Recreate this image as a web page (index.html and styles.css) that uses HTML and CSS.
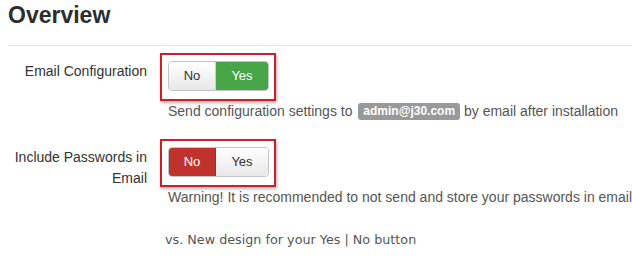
FILE: index.html
```html
<!DOCTYPE html>
<html lang="en">

<head>
    <meta charset="UTF-8">
    <meta name="viewport" content="width=device-width, initial-scale=1.0">
    <title>Overview</title>
    <link rel="stylesheet" href="styles.css">
</head>

<body>

    <!-- Page title -->
    <div class="header">
        <h1>Overview</h1>
    </div>

    <div class="form">

        <!-- Email configuration -->
        <div class="row">
            <div class="label">Email Configuration</div>
            <div class="controls">
                <div class="mark">
                    <div class="toggle">
                        <span class="btn btn-no">No</span>
                        <span class="btn btn-yes yes-on">Yes</span>
                    </div>
                </div>
                <p class="help">Send configuration settings to <span class="badge">admin@j30.com</span> by email after installation</p>
            </div>
        </div>

        <!-- Include passwords -->
        <div class="row">
            <div class="label">Include Passwords in Email</div>
            <div class="controls">
                <div class="mark">
                    <div class="toggle">
                        <span class="btn btn-no no-on">No</span>
                        <span class="btn btn-yes">Yes</span>
                    </div>
                </div>
                <p class="help">Warning! It is recommended to not send and store your passwords in email.</p>
            </div>
        </div>

        <div class="row">
            <div></div>
            <p class="note">vs. New design for your Yes | No button</p>
        </div>

    </div>

</body>

</html>
```

FILE: styles.css
```css
html, body {
    margin: 0;
    padding: 0;
    background: #fff;
}

body {
    padding-left: 8px;
    width: 624px;
    height: 280px;
    overflow: hidden;
    font-family: "Liberation Sans", Arial, sans-serif;
    font-size: 14px;
    line-height: 20px;
    color: #333;
}

.header {
    padding-top: 1px;
    padding-bottom: 16px;
    border-bottom: 1px solid #e6e6e6;
}

h1 {
    margin: 0;
    font-size: 23px;
    line-height: 28px;
    font-weight: bold;
    color: #2d2d2d;
}

.form {
    display: flex;
    flex-direction: column;
    gap: 18px;
    padding-top: 7px;
}

.row {
    display: grid;
    grid-template-columns: 139px 1fr;
    column-gap: 13px;
}

.label {
    text-align: right;
    padding-top: 8px;
    line-height: 21px;
    color: #333;
}

.controls {
    display: flex;
    flex-direction: column;
    align-items: flex-start;
}

/* red highlight round the switch */
.mark {
    border: 2px solid #cc1f2b;
    padding: 6px 5px 8px 6px;
    box-shadow: 1px 2px 3px rgba(0, 0, 0, 0.3);
}

.toggle {
    display: flex;
    height: 28px;
    border: 1px solid #c4c4c4;
    border-radius: 4px;
    overflow: hidden;
    font-size: 13px;
}

.btn {
    display: flex;
    align-items: center;
    justify-content: center;
    background: linear-gradient(#ffffff, #e8e8e8);
    color: #333;
}

.btn-no {
    width: 46px;
    border-right: 1px solid #d0d0d0;
}

.btn-yes {
    width: 52px;
}

.yes-on {
    background: #47a447;
    color: #fff;
}

.no-on {
    background: #c0332d;
    color: #fff;
    border-right-color: #a82b26;
}

.help {
    margin: 0;
    padding-left: 8px;
    white-space: nowrap;
    color: #555;
}

.badge {
    display: inline-block;
    padding: 0 5px;
    margin-left: 2px;
    line-height: 17px;
    font-size: 12px;
    font-weight: bold;
    color: #fff;
    background: #999;
    border-radius: 3px;
    vertical-align: 1px;
}

.note {
    margin: 5px 0 0 0;
    padding-left: 5px;
    font-family: "DejaVu Sans", sans-serif;
    font-size: 12.75px;
    color: #555;
    white-space: nowrap;
}
```
